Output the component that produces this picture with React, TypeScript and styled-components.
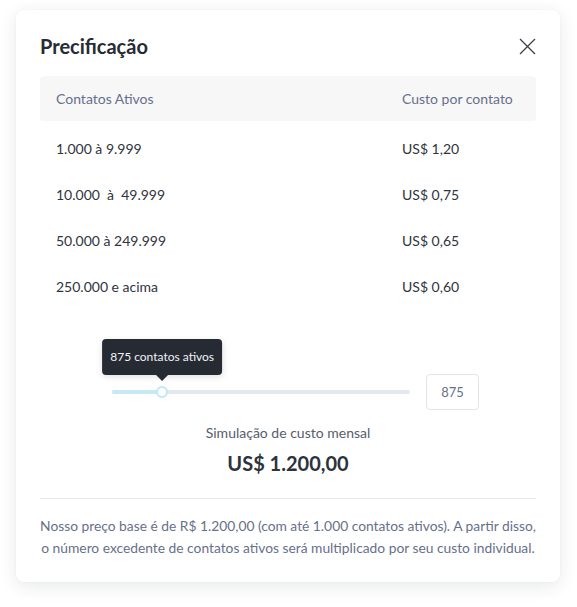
import React from "react";
import styled, { createGlobalStyle } from "styled-components";

const Global = createGlobalStyle`
  html, body { margin: 0; padding: 0; background: #ffffff; }
  body { font-family: Lato, "Noto Sans", sans-serif; -webkit-font-smoothing: antialiased; }
  * { box-sizing: border-box; }
`;

const Page = styled.div`
  padding: 10px 17px 25px 16px;
`;

const Card = styled.div`
  width: 544px;
  background: #ffffff;
  border-radius: 8px;
  box-shadow: 0 4px 18px rgba(30, 40, 60, 0.10), 0 0 2px rgba(30, 40, 60, 0.05);
  padding: 23px 24px 23px 24px;
  display: flex;
  flex-direction: column;
`;

const Header = styled.div`
  display: flex;
  align-items: center;
  justify-content: space-between;
  height: 26px;
`;

const Title = styled.h2`
  margin: 0;
  font-size: 20px;
  line-height: 26px;
  font-weight: 700;
  color: #272b33;
`;

const CloseButton = styled.button`
  border: none;
  background: none;
  padding: 0;
  width: 18px;
  height: 18px;
  display: flex;
  align-items: center;
  justify-content: center;
  cursor: pointer;
`;

const Table = styled.div`
  margin-top: 17px;
  display: flex;
  flex-direction: column;
`;

const Row = styled.div<{ $head?: boolean }>`
  display: grid;
  grid-template-columns: 346px 1fr;
  align-items: center;
  padding: 0 16px;
  height: ${(p) => (p.$head ? "45px" : "46px")};
  margin-bottom: ${(p) => (p.$head ? "4px" : "0")};
  background: ${(p) => (p.$head ? "#f7f7f8" : "transparent")};
  border-radius: ${(p) => (p.$head ? "4px" : "0")};
  font-size: 14px;
  color: ${(p) => (p.$head ? "#66708a" : "#30343c")};
`;

const SliderRow = styled.div`
  margin-top: 65px;
  padding-left: 72px;
  display: flex;
  align-items: center;
  gap: 16px;
  height: 36px;
`;

const Track = styled.div`
  position: relative;
  width: 298px;
  height: 4px;
  border-radius: 2px;
  background: #e3e7ee;
`;

const Fill = styled.div`
  position: absolute;
  left: 0;
  top: 0;
  height: 4px;
  border-radius: 2px;
  background: #c5e9f6;
`;

const Thumb = styled.div`
  position: absolute;
  top: 50%;
  width: 12px;
  height: 12px;
  margin-left: -6px;
  margin-top: -6px;
  border-radius: 50%;
  background: #ffffff;
  border: 2px solid #c2e6f4;
`;

const Tooltip = styled.div`
  position: absolute;
  bottom: 19px;
  transform: translateX(-50%);
  background: #262a33;
  color: #f2f3f5;
  font-size: 12px;
  line-height: 36px;
  height: 36px;
  padding: 0 8px;
  border-radius: 4px;
  white-space: nowrap;
  box-shadow: 0 2px 6px rgba(0, 0, 0, 0.12);

  &::after {
    content: "";
    position: absolute;
    left: 50%;
    bottom: -6px;
    margin-left: -6px;
    border-left: 6px solid transparent;
    border-right: 6px solid transparent;
    border-top: 6px solid #262a33;
  }
`;

const ValueBox = styled.div`
  width: 53px;
  height: 36px;
  border: 1px solid #e2e5ea;
  border-radius: 4px;
  display: flex;
  align-items: center;
  justify-content: center;
  font-size: 13px;
  color: #6a7183;
`;

const Simulation = styled.div`
  margin-top: 13px;
  text-align: center;
  font-size: 14px;
  line-height: 20px;
  color: #575d6b;
`;

const Amount = styled.div`
  margin-top: 8px;
  text-align: center;
  font-size: 20px;
  line-height: 24px;
  font-weight: 700;
  color: #2d323c;
`;

const Divider = styled.hr`
  margin: 23px 0 0 0;
  border: none;
  border-top: 1px solid #e5e8ed;
  height: 0;
`;

const Note = styled.p`
  margin: 16px -10px 0 -10px;
  text-align: center;
  font-size: 13.8px;
  line-height: 22px;
  color: #66708a;
  white-space: nowrap;
`;

const rows = [
  ["1.000 à 9.999", "US$ 1,20"],
  ["10.000  à  49.999", "US$ 0,75"],
  ["50.000 à 249.999", "US$ 0,65"],
  ["250.000 e acima", "US$ 0,60"],
];

export default function App() {
  const value = 875;
  const max = 5200;
  const pct = (value / max) * 100;
  return (
    <Page>
      <Global />
      <Card>
        <Header>
          <Title>Precificação</Title>
          <CloseButton aria-label="Fechar">
            <svg width="17" height="17" viewBox="0 0 17 17">
              <path d="M1 1 L16 16 M16 1 L1 16" stroke="#3b404b" strokeWidth="1.3" fill="none" />
            </svg>
          </CloseButton>
        </Header>
        <Table>
          <Row $head>
            <span>Contatos Ativos</span>
            <span>Custo por contato</span>
          </Row>
          {rows.map(([a, b]) => (
            <Row key={a}>
              <span style={{ whiteSpace: "pre" }}>{a}</span>
              <span>{b}</span>
            </Row>
          ))}
        </Table>
        <SliderRow>
          <Track>
            <Fill style={{ width: `${pct}%` }} />
            <Thumb style={{ left: `${pct}%` }} />
            <Tooltip style={{ left: `${pct}%` }}>{value} contatos ativos</Tooltip>
          </Track>
          <ValueBox>{value}</ValueBox>
        </SliderRow>
        <Simulation>Simulação de custo mensal</Simulation>
        <Amount>US$ 1.200,00</Amount>
        <Divider />
        <Note>
          Nosso preço base é de R$ 1.200,00 (com até 1.000 contatos ativos). A partir disso,
          <br />o número excedente de contatos ativos será multiplicado por seu custo individual.
        </Note>
      </Card>
    </Page>
  );
}
